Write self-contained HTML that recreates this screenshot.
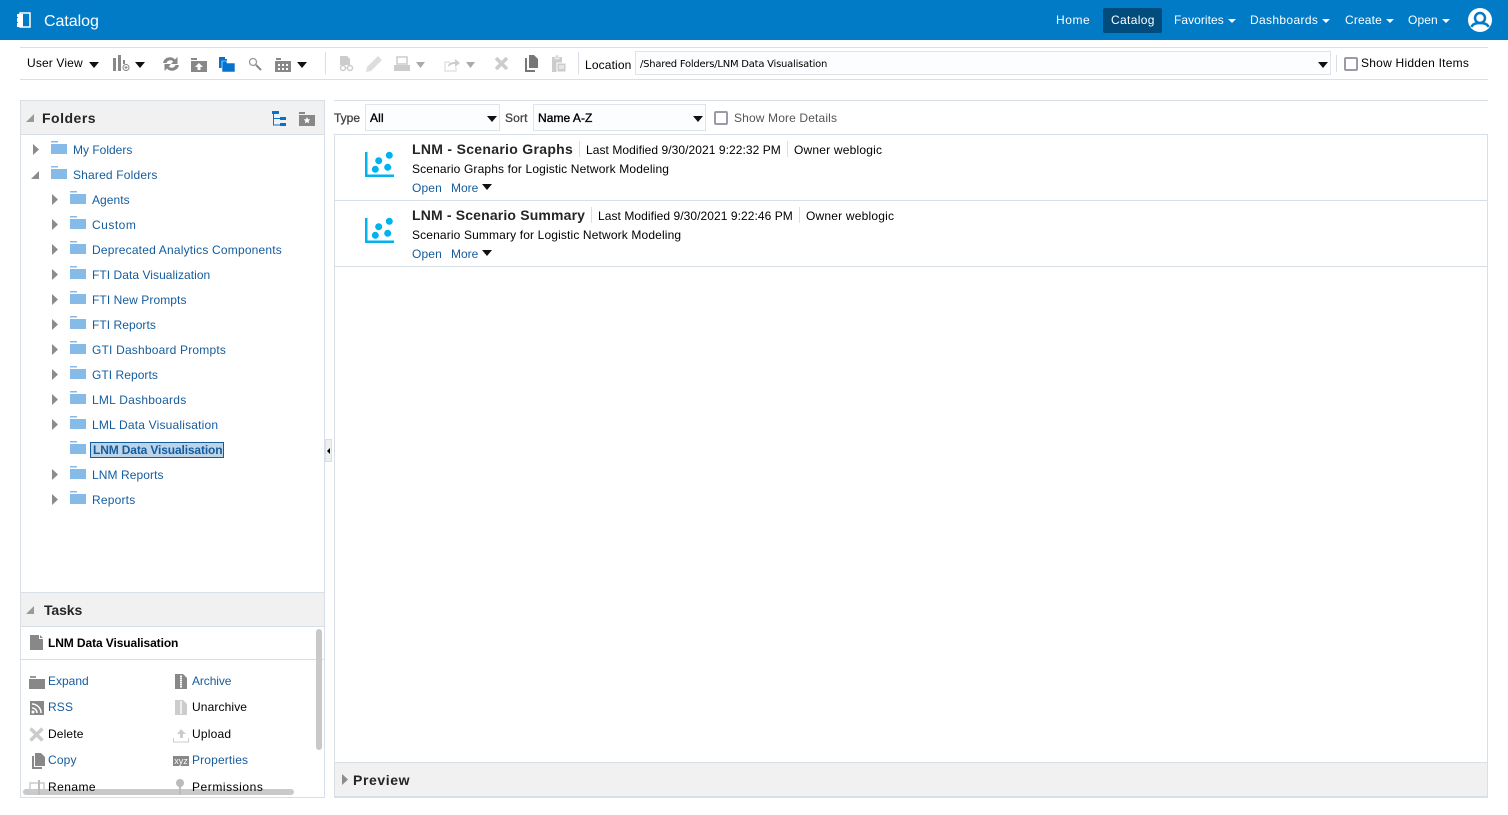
<!DOCTYPE html>
<html><head><meta charset="utf-8"><style>
html,body{margin:0;padding:0;background:#fff;width:1508px;height:815px;overflow:hidden}
body{position:relative;font:12px/16px "Liberation Sans",sans-serif;color:#000;letter-spacing:.14px}
.a,.t,svg{position:absolute}
.t{white-space:nowrap}
.l{color:#145c9e}
.n{color:#fff;letter-spacing:.2px}
.b{font-weight:bold;font-size:14px;color:#252525;letter-spacing:.3px}
.g{color:#555}
.s{letter-spacing:.19px}
</style></head><body>
<svg width="0" height="0" style="position:absolute"><defs>
<g id="f"><path d="M0 0h7v1.500H0z" fill="#86bbe8"/><path d="M0 3h16v10H0z" fill="#86bbe8"/></g>
<g id="ar"><path d="M0 0l6 5.500L0 11z" fill="#8a8c8e"/></g>
<g id="dv"><path d="M0 0h10L5 6z" fill="#111"/></g>
<g id="gd"><path d="M0 0h8L4 5z" fill="#999"/></g>
<g id="w"><path d="M0 0h8L4 4z" fill="#fff"/></g>
<g id="viz"><path d="M1 1h2.500v22.500H30V26H1z" fill="#00b2ee"/><circle cx="25.300" cy="4.300" r="3.500" fill="#00b2ee"/><circle cx="14.700" cy="9.700" r="3.500" fill="#00b2ee"/><circle cx="11.300" cy="18.300" r="3.500" fill="#00b2ee"/><circle cx="23.700" cy="16.300" r="3.500" fill="#00b2ee"/></g>
</defs></svg>

<div class="a" style="left:0;top:0;width:1508px;height:40px;background:#027bc7"></div>
<svg style="left:16px;top:12px" width="16" height="17" viewBox="0 0 16 17"><path d="M4 1h10v14H4z" fill="none" stroke="#fff" stroke-width="1.500"/><path d="M1 2h6v13H1z" fill="#fff"/><path d="M0 5h2v1H0zM0 10h2v1H0z" fill="#027bc7"/></svg>
<div class="t n" style="left:44px;top:12px;font-size:16px;line-height:19px;letter-spacing:-.05px">Catalog</div>
<div class="t n" style="left:1056px;top:12px;letter-spacing:.55px">Home</div>
<div class="a" style="left:1103px;top:8px;width:59px;height:25px;background:#014c7c;border-radius:2px"></div>
<div class="t n" style="left:1111px;top:12px;letter-spacing:.35px">Catalog</div>
<div class="t n" style="left:1174px;top:12px;letter-spacing:.05px">Favorites</div><svg style="left:1228px;top:19px" width="8" height="5"><use href="#w"/></svg>
<div class="t n" style="left:1250px;top:12px;letter-spacing:.35px">Dashboards</div><svg style="left:1322px;top:19px" width="8" height="5"><use href="#w"/></svg>
<div class="t n" style="left:1345px;top:12px;letter-spacing:.15px">Create</div><svg style="left:1386px;top:19px" width="8" height="5"><use href="#w"/></svg>
<div class="t n" style="left:1408px;top:12px;letter-spacing:.12px">Open</div><svg style="left:1442px;top:19px" width="8" height="5"><use href="#w"/></svg>
<svg style="left:1468px;top:8px" width="24" height="24" viewBox="0 0 24 24"><circle cx="12" cy="12" r="12" fill="#fff"/><circle cx="12" cy="10" r="5" fill="none" stroke="#027bc7" stroke-width="2.500"/><path d="M3.500 19c1-3 4-4 8.500-4s7.500 1 8.500 4" fill="none" stroke="#027bc7" stroke-width="2.500"/></svg>

<!-- toolbar -->
<div class="a" style="left:20px;top:47px;width:1468px;height:1px;background:#d9dfe6"></div>
<div class="a" style="left:20px;top:79px;width:1468px;height:1px;background:#d9dfe6"></div>
<div class="t" style="left:27px;top:55px;letter-spacing:.15px">User View</div>
<svg style="left:89px;top:62px" width="10" height="6"><use href="#dv"/></svg>
<svg style="left:113px;top:55px" width="18" height="17"><path d="M0 3h3v13H0zM5 0h3v16H5z" fill="#888"/><path d="M10 5h2v4h-2z" fill="#888"/><circle cx="13" cy="12.500" r="3" fill="none" stroke="#888"/><path d="M11.500 12.500h3M13 11v3" stroke="#888"/></svg>
<svg style="left:135px;top:62px" width="10" height="6"><use href="#dv"/></svg>
<svg style="left:163px;top:57px" width="16" height="14" viewBox="0 0 16 14"><path d="M0 6A7 7 0 0 1 12 2.500L14.500 0v7H8l2.200-2.500A4 4 0 0 0 3.500 6zM16 8a7 7 0 0 1-12 3.500L1.500 14V7H8L5.800 9.500A4 4 0 0 0 12.500 8z" fill="#888"/></svg>
<svg style="left:191px;top:58px" width="16" height="14"><path d="M0 0h6v2H0z" fill="#888"/><path d="M0 3h16v11H0z" fill="#888"/><path d="M8 5l4 4h-2.500v3h-3V9H4z" fill="#fff"/></svg>
<svg style="left:219px;top:57px" width="16" height="15"><path d="M0 0h6v2h2v9H0z" fill="#0572ce"/><path d="M3 4h5v2h8v9H3z" fill="#0572ce" stroke="#fff" stroke-width=".6"/></svg>
<svg style="left:248px;top:57px" width="14" height="15"><circle cx="5" cy="5" r="3.500" fill="none" stroke="#999" stroke-width="1.300"/><path d="M8 8l5 5" stroke="#888" stroke-width="2"/></svg>
<svg style="left:275px;top:58px" width="16" height="14"><path d="M1 0h5v2H1z" fill="#888"/><path d="M0 3h16v11H0z" fill="#888"/><path d="M3 6h2v2H3zM7 6h2v2H7zM11 6h2v2h-2zM3 10h2v2H3zM7 10h2v2H7zM11 10h2v2h-2z" fill="#fff"/></svg>
<svg style="left:297px;top:62px" width="10" height="6"><use href="#dv"/></svg>
<div class="a" style="left:325px;top:52px;width:1px;height:22px;background:#d9dfe6"></div>
<svg style="left:339px;top:56px" width="15" height="16"><path d="M1 0h7l3 3v6H1z" fill="#ccc"/><circle cx="4" cy="12" r="2.500" fill="none" stroke="#ccc" stroke-width="1.500"/><circle cx="11" cy="12" r="2.500" fill="none" stroke="#ccc" stroke-width="1.500"/><path d="M6 12h3" stroke="#ccc"/></svg>
<svg style="left:366px;top:56px" width="16" height="16"><path d="M12 0l4 4L5 15l-5 1 1-5z" fill="#ddd"/></svg>
<svg style="left:394px;top:56px" width="16" height="16"><path d="M3 1h10v7H3z" fill="none" stroke="#ccc" stroke-width="1.500"/><path d="M0 9h16v6H0z" fill="#ccc"/></svg>
<svg style="left:416px;top:62px" width="10" height="6"><path d="M0 0h9L4.500 6z" fill="#aaa"/></svg>
<svg style="left:444px;top:57px" width="16" height="15"><path d="M1 5h5M1 5v9h11v-4" fill="none" stroke="#ddd" stroke-width="1.200"/><path d="M4 10c0-4 3-5 7-5V2l5 4-5 4V7c-3 0-5 1-7 3z" fill="#ccc"/></svg>
<svg style="left:466px;top:62px" width="10" height="6"><path d="M0 0h9L4.500 6z" fill="#aaa"/></svg>
<svg style="left:494px;top:56px" width="15" height="15"><path d="M2 2l11 11M13 2L2 13" stroke="#ccc" stroke-width="3.500"/></svg>
<svg style="left:524px;top:55px" width="14" height="17"><path d="M5 0h5l4 4v9H5z" fill="#777"/><path d="M2 3h1v12h8v2H1V3z" fill="#777"/></svg>
<svg style="left:551px;top:55px" width="15" height="17"><path d="M1 2h10v15H1z" fill="#ccc"/><path d="M4 0h4v4H4z" fill="#ddd" stroke="#fff" stroke-width=".5"/><path d="M6 8h9v9H6z" fill="#ccc" stroke="#fff"/><path d="M8 11h5M8 13h5" stroke="#fff"/></svg>
<div class="a" style="left:578px;top:52px;width:1px;height:22px;background:#d9dfe6"></div>
<div class="t" style="left:585px;top:57px">Location</div>
<div class="a" style="left:635px;top:51px;width:696px;height:24px;background:#fcfdfe;border:1px solid #dfe4ea;box-sizing:border-box"></div>
<div class="t" style="left:640px;top:57px;font:10px/15px 'DejaVu Sans',sans-serif;letter-spacing:-.24px">/Shared Folders/LNM Data Visualisation</div>
<svg style="left:1318px;top:62px" width="10" height="7"><use href="#dv"/></svg>
<div class="a" style="left:1336px;top:55px;width:1px;height:17px;background:#d9dfe6"></div>
<div class="a" style="left:1344px;top:57px;width:14px;height:14px;border:2px solid #9a9aa8;border-radius:2px;box-sizing:border-box;background:#fff"></div>
<div class="t" style="left:1361px;top:55px;letter-spacing:.24px">Show Hidden Items</div>

<!-- left panel -->
<div class="a" style="left:20px;top:100px;width:305px;height:698px;border:1px solid #d9dfe6;box-sizing:border-box;background:#fff"></div>
<div class="a" style="left:20px;top:100px;width:305px;height:35px;background:#f1f1f1;border:1px solid #d9dfe6;box-sizing:border-box"></div>
<svg style="left:26px;top:114px" width="8" height="8"><path d="M8 0v8H0z" fill="#999"/></svg>
<div class="t b" style="left:42px;top:110px;letter-spacing:.5px">Folders</div>
<svg style="left:271px;top:111px" width="16" height="16"><path d="M1 0h7v3H1zM9 6h6v3H9zM9 12h6v3H9z" fill="#0572ce"/><path d="M2.500 3v11H9M2.500 7.500H9" fill="none" stroke="#0572ce"/></svg>
<svg style="left:299px;top:112px" width="16" height="14"><path d="M0 0h6v2H0z" fill="#888"/><path d="M0 3h16v11H0z" fill="#888"/><path d="M8 5l1 2.200 2.300.2-1.700 1.600.5 2.300L8 10.100 5.900 11.300l.5-2.300-1.700-1.600 2.300-.2z" fill="#fff"/></svg>

<svg style="left:33px;top:144px" width="6" height="11"><use href="#ar"/></svg>
<svg style="left:51px;top:141px" width="16" height="13"><use href="#f"/></svg>
<div class="t l" style="left:73px;top:142px;letter-spacing:0">My Folders</div>
<svg style="left:31px;top:171px" width="8" height="8"><path d="M8 0v8H0z" fill="#8a8c8e"/></svg>
<svg style="left:51px;top:166px" width="16" height="13"><use href="#f"/></svg>
<div class="t l" style="left:73px;top:167px;letter-spacing:.18px">Shared Folders</div>

<svg style="left:52px;top:194px" width="6" height="11"><use href="#ar"/></svg><svg style="left:70px;top:191px" width="16" height="13"><use href="#f"/></svg><div class="t l" style="left:92px;top:192px;letter-spacing:.05px">Agents</div>
<svg style="left:52px;top:219px" width="6" height="11"><use href="#ar"/></svg><svg style="left:70px;top:216px" width="16" height="13"><use href="#f"/></svg><div class="t l" style="left:92px;top:217px;letter-spacing:.5px">Custom</div>
<svg style="left:52px;top:244px" width="6" height="11"><use href="#ar"/></svg><svg style="left:70px;top:241px" width="16" height="13"><use href="#f"/></svg><div class="t l s" style="left:92px;top:242px">Deprecated Analytics Components</div>
<svg style="left:52px;top:269px" width="6" height="11"><use href="#ar"/></svg><svg style="left:70px;top:266px" width="16" height="13"><use href="#f"/></svg><div class="t l" style="left:92px;top:267px;letter-spacing:.05px">FTI Data Visualization</div>
<svg style="left:52px;top:294px" width="6" height="11"><use href="#ar"/></svg><svg style="left:70px;top:291px" width="16" height="13"><use href="#f"/></svg><div class="t l" style="left:92px;top:292px;letter-spacing:.08px">FTI New Prompts</div>
<svg style="left:52px;top:319px" width="6" height="11"><use href="#ar"/></svg><svg style="left:70px;top:316px" width="16" height="13"><use href="#f"/></svg><div class="t l" style="left:92px;top:317px;letter-spacing:.05px">FTI Reports</div>
<svg style="left:52px;top:344px" width="6" height="11"><use href="#ar"/></svg><svg style="left:70px;top:341px" width="16" height="13"><use href="#f"/></svg><div class="t l s" style="left:92px;top:342px">GTI Dashboard Prompts</div>
<svg style="left:52px;top:369px" width="6" height="11"><use href="#ar"/></svg><svg style="left:70px;top:366px" width="16" height="13"><use href="#f"/></svg><div class="t l" style="left:92px;top:367px;letter-spacing:.05px">GTI Reports</div>
<svg style="left:52px;top:394px" width="6" height="11"><use href="#ar"/></svg><svg style="left:70px;top:391px" width="16" height="13"><use href="#f"/></svg><div class="t l s" style="left:92px;top:392px;letter-spacing:.25px">LML Dashboards</div>
<svg style="left:52px;top:419px" width="6" height="11"><use href="#ar"/></svg><svg style="left:70px;top:416px" width="16" height="13"><use href="#f"/></svg><div class="t l s" style="left:92px;top:417px">LML Data Visualisation</div>
<svg style="left:70px;top:441px" width="16" height="13"><use href="#f"/></svg>
<div class="a" style="left:90px;top:442px;width:134px;height:16px;background:#bcd4e8;border:1px solid #145c9e;box-sizing:border-box"></div>
<div class="t l" style="left:93px;top:442px;font-weight:bold;letter-spacing:-.14px">LNM Data Visualisation</div>
<svg style="left:52px;top:469px" width="6" height="11"><use href="#ar"/></svg><svg style="left:70px;top:466px" width="16" height="13"><use href="#f"/></svg><div class="t l" style="left:92px;top:467px;letter-spacing:.08px">LNM Reports</div>
<svg style="left:52px;top:494px" width="6" height="11"><use href="#ar"/></svg><svg style="left:70px;top:491px" width="16" height="13"><use href="#f"/></svg><div class="t l" style="left:92px;top:492px;letter-spacing:.2px">Reports</div>

<div class="a" style="left:325px;top:439px;width:7px;height:23px;background:#eef0f2;border:1px solid #d9dfe6;box-sizing:border-box"></div>
<svg style="left:327px;top:448px" width="3" height="6"><path d="M3 0v6L0 3z" fill="#000"/></svg>

<!-- tasks -->
<div class="a" style="left:20px;top:592px;width:305px;height:35px;background:#f1f1f1;border:1px solid #d9dfe6;box-sizing:border-box"></div>
<svg style="left:26px;top:606px" width="8" height="8"><path d="M8 0v8H0z" fill="#999"/></svg>
<div class="t b" style="left:44px;top:602px;letter-spacing:-.1px">Tasks</div>
<svg style="left:30px;top:635px" width="13" height="15"><path d="M0 0h9v4h4v11H0zM10 0l3 3h-3z" fill="#888"/></svg>
<div class="t" style="left:48px;top:635px;font-weight:bold;letter-spacing:-.1px">LNM Data Visualisation</div>
<div class="a" style="left:21px;top:659px;width:303px;height:1px;background:#d9dfe6"></div>

<div class="a" style="left:316px;top:629px;width:6px;height:121px;background:#c9c9c9;border-radius:3px"></div>
<div class="a" style="left:23px;top:789px;width:271px;height:6px;background:#c9c9c9;border-radius:3px"></div>

<svg style="left:29px;top:676px" width="16" height="13"><path d="M1 0h6v2H1z" fill="#999"/><path d="M0 3h16v10H0z" fill="#888"/></svg>
<div class="t l" style="left:48px;top:673px;letter-spacing:0">Expand</div>
<svg style="left:175px;top:674px" width="12" height="15"><path d="M0 0h8l4 4v11H0z" fill="#888"/><path d="M5 1h2v13H5z" fill="#fff"/><path d="M6 1v13" stroke="#888" stroke-dasharray="1 1"/></svg>
<div class="t l" style="left:192px;top:673px;letter-spacing:-.1px">Archive</div>
<svg style="left:30px;top:701px" width="14" height="14"><path d="M0 0h14v14H0z" fill="#888"/><circle cx="3" cy="11" r="1.500" fill="#fff"/><path d="M2 7a5 5 0 0 1 5 5M2 3a9 9 0 0 1 9 9" fill="none" stroke="#fff" stroke-width="1.500"/></svg>
<div class="t l" style="left:48px;top:699px">RSS</div>
<svg style="left:175px;top:700px" width="12" height="15"><path d="M0 0h8l4 4v11H0z" fill="#ccc"/><path d="M5 1h2v13H5z" fill="#eee"/></svg>
<div class="t" style="left:192px;top:699px;letter-spacing:.12px">Unarchive</div>
<svg style="left:29px;top:727px" width="15" height="15"><path d="M1.500 1.500l12 12M13.500 1.500l-12 12" stroke="#ccc" stroke-width="3.500"/></svg>
<div class="t" style="left:48px;top:726px">Delete</div>
<svg style="left:173px;top:728px" width="16" height="15"><path d="M8 1l5 5h-3v4H7V6H4z" fill="#ccc"/><path d="M0.500 10v4h15v-4" fill="none" stroke="#ccc"/></svg>
<div class="t" style="left:192px;top:726px;letter-spacing:.2px">Upload</div>
<svg style="left:31px;top:753px" width="14" height="16"><path d="M4 0h6l4 4v9H4z" fill="#888"/><path d="M1 3h2v11h8v2H1z" fill="#888"/></svg>
<div class="t l" style="left:48px;top:752px;letter-spacing:.15px">Copy</div>
<div class="a" style="left:173px;top:756px;width:16px;height:10px;background:#888;color:#fff;font-size:9px;line-height:10px;text-align:center;letter-spacing:0">xyz</div>
<div class="t l" style="left:192px;top:752px;letter-spacing:.15px">Properties</div>
<svg style="left:29px;top:780px" width="16" height="15"><path d="M1 3h14v8H1z" fill="none" stroke="#ccc" stroke-width="1.500"/><path d="M10 0v15" stroke="#bbb" stroke-width="2"/></svg>
<div class="t" style="left:48px;top:779px;letter-spacing:.45px">Rename</div>
<svg style="left:175px;top:779px" width="10" height="18"><circle cx="5" cy="4" r="4" fill="#bbb"/><path d="M4 7h2v9H4z" fill="#bbb"/></svg>
<div class="t" style="left:192px;top:779px;letter-spacing:.55px">Permissions</div>

<!-- right -->
<div class="a" style="left:334px;top:100px;width:1154px;height:1px;background:#d9dfe6"></div>
<div class="t" style="left:334px;top:110px;color:#444;-webkit-text-stroke:.3px #444;letter-spacing:0">Type</div>
<div class="a" style="left:365px;top:104px;width:135px;height:27px;background:#fcfdfe;border:1px solid #dfe4ea;box-sizing:border-box"></div>
<div class="t" style="left:370px;top:110px;-webkit-text-stroke:.35px #000">All</div>
<svg style="left:487px;top:116px" width="10" height="7"><use href="#dv"/></svg>
<div class="t" style="left:505px;top:110px;color:#444;-webkit-text-stroke:.3px #444">Sort</div>
<div class="a" style="left:533px;top:104px;width:173px;height:27px;background:#fcfdfe;border:1px solid #dfe4ea;box-sizing:border-box"></div>
<div class="t" style="left:538px;top:110px;-webkit-text-stroke:.35px #000;letter-spacing:.05px">Name A-Z</div>
<svg style="left:693px;top:116px" width="10" height="7"><use href="#dv"/></svg>
<div class="a" style="left:714px;top:111px;width:14px;height:14px;border:2px solid #9a9aa8;border-radius:2px;box-sizing:border-box;background:#fff"></div>
<div class="t g" style="left:734px;top:110px;letter-spacing:.14px">Show More Details</div>

<div class="a" style="left:334px;top:134px;width:1154px;height:664px;border:1px solid #d9dfe6;box-sizing:border-box;background:#fff"></div>

<svg style="left:364px;top:151px" width="30" height="30"><use href="#viz"/></svg>
<div class="t b" style="left:412px;top:141px">LNM - Scenario Graphs</div>
<div class="a" style="left:579px;top:141px;width:1px;height:16px;background:#d9dfe6"></div>
<div class="t" style="left:586px;top:142px;letter-spacing:.06px">Last Modified 9/30/2021 9:22:32 PM</div>
<div class="a" style="left:787px;top:141px;width:1px;height:16px;background:#d9dfe6"></div>
<div class="t" style="left:794px;top:142px;letter-spacing:.2px">Owner weblogic</div>
<div class="t" style="left:412px;top:161px">Scenario Graphs for Logistic Network Modeling</div>
<div class="t l" style="left:412px;top:180px">Open</div>
<div class="t l" style="left:451px;top:180px;letter-spacing:0">More</div>
<svg style="left:482px;top:184px" width="10" height="7"><use href="#dv"/></svg>
<div class="a" style="left:335px;top:200px;width:1152px;height:1px;background:#d9dfe6"></div>

<svg style="left:364px;top:217px" width="30" height="30"><use href="#viz"/></svg>
<div class="t b" style="left:412px;top:207px;letter-spacing:.16px">LNM - Scenario Summary</div>
<div class="a" style="left:591px;top:207px;width:1px;height:16px;background:#d9dfe6"></div>
<div class="t" style="left:598px;top:208px;letter-spacing:.06px">Last Modified 9/30/2021 9:22:46 PM</div>
<div class="a" style="left:799px;top:207px;width:1px;height:16px;background:#d9dfe6"></div>
<div class="t" style="left:806px;top:208px;letter-spacing:.2px">Owner weblogic</div>
<div class="t" style="left:412px;top:227px">Scenario Summary for Logistic Network Modeling</div>
<div class="t l" style="left:412px;top:246px">Open</div>
<div class="t l" style="left:451px;top:246px;letter-spacing:0">More</div>
<svg style="left:482px;top:250px" width="10" height="7"><use href="#dv"/></svg>
<div class="a" style="left:335px;top:266px;width:1152px;height:1px;background:#d9dfe6"></div>

<div class="a" style="left:334px;top:762px;width:1154px;height:36px;background:#f1f1f1;border:1px solid #d9dfe6;border-bottom-width:2px;box-sizing:border-box"></div>
<svg style="left:342px;top:774px" width="6" height="11"><path d="M0 0l6 5.500L0 11z" fill="#8a8c8e"/></svg>
<div class="t b" style="left:353px;top:772px;letter-spacing:.6px">Preview</div>
</body></html>
